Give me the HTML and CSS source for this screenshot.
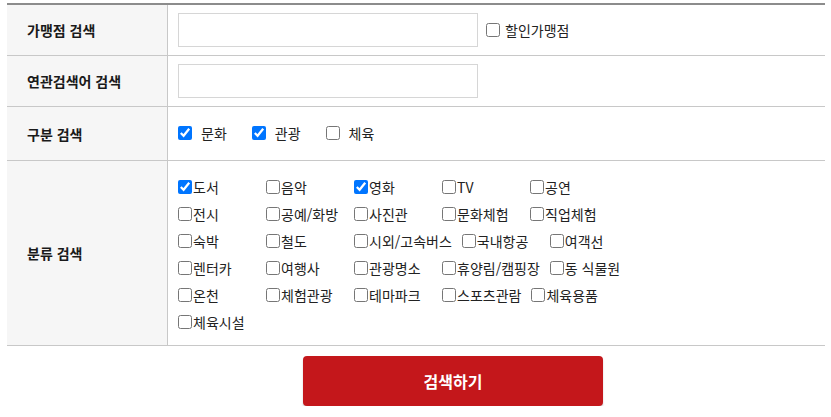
FILE: index.html
```html
<!DOCTYPE html>
<html lang="ko">
<head>
<meta charset="utf-8">
<title>가맹점 검색</title>
<link rel="stylesheet" href="styles.css">
</head>
<body>
<div class="search">
  <div class="table">
    <div class="row r1">
      <div class="th">가맹점 검색</div>
      <div class="td">
        <input type="text" class="txt">
        <label class="chk single"><input type="checkbox"><span>할인가맹점</span></label>
      </div>
    </div>
    <div class="row r2">
      <div class="th">연관검색어 검색</div>
      <div class="td"><input type="text" class="txt"></div>
    </div>
    <div class="row r3">
      <div class="th">구분 검색</div>
      <div class="td gubun">
        <label class="chk big"><input type="checkbox" checked><span>문화</span></label>
        <label class="chk big"><input type="checkbox" checked><span>관광</span></label>
        <label class="chk big"><input type="checkbox"><span>체육</span></label>
      </div>
    </div>
    <div class="row r4">
      <div class="th">분류 검색</div>
      <div class="td">
        <div class="cats">
          <label class="item"><input type="checkbox" checked><span>도서</span></label>
          <label class="item"><input type="checkbox"><span>음악</span></label>
          <label class="item"><input type="checkbox" checked><span>영화</span></label>
          <label class="item"><input type="checkbox"><span>TV</span></label>
          <label class="item"><input type="checkbox"><span>공연</span></label>
          <label class="item"><input type="checkbox"><span>전시</span></label>
          <label class="item"><input type="checkbox"><span>공예/화방</span></label>
          <label class="item"><input type="checkbox"><span>사진관</span></label>
          <label class="item"><input type="checkbox"><span>문화체험</span></label>
          <label class="item"><input type="checkbox"><span>직업체험</span></label>
          <label class="item"><input type="checkbox"><span>숙박</span></label>
          <label class="item"><input type="checkbox"><span>철도</span></label>
          <label class="item"><input type="checkbox"><span>시외/고속버스</span></label>
          <label class="item"><input type="checkbox"><span>국내항공</span></label>
          <label class="item"><input type="checkbox"><span>여객선</span></label>
          <label class="item"><input type="checkbox"><span>렌터카</span></label>
          <label class="item"><input type="checkbox"><span>여행사</span></label>
          <label class="item"><input type="checkbox"><span>관광명소</span></label>
          <label class="item"><input type="checkbox"><span>휴양림/캠핑장</span></label>
          <label class="item"><input type="checkbox"><span>동 식물원</span></label>
          <label class="item"><input type="checkbox"><span>온천</span></label>
          <label class="item"><input type="checkbox"><span>체험관광</span></label>
          <label class="item"><input type="checkbox"><span>테마파크</span></label>
          <label class="item"><input type="checkbox"><span>스포츠관람</span></label>
          <label class="item"><input type="checkbox"><span>체육용품</span></label>
          <label class="item"><input type="checkbox"><span>체육시설</span></label>
        </div>
      </div>
    </div>
  </div>
  <div class="actions">
    <button type="button" class="btn">검색하기</button>
  </div>
</div>
</body>
</html>
```
FILE: styles.css
```css
* { box-sizing: border-box; }
html, body { margin: 0; padding: 0; background: #fff; }
body {
  font-family: "Noto Sans CJK KR", "Noto Sans", "Liberation Sans", sans-serif;
  font-size: 14px;
  color: #222;
}
.search {
  padding: 3px 6px 0 7px;
}
.table {
  border-top: 2px solid #8c8c8c;
}
.row {
  display: grid;
  grid-template-columns: 161px 1fr;
  border-bottom: 1px solid #c8c8c8;
}
.r1, .r2 { height: 51px; }
.r3 { height: 54px; }
.r4 { height: 185px; }
.th {
  background: #f6f6f6;
  border-right: 1px solid #c8c8c8;
  display: flex;
  align-items: center;
  padding-left: 20px;
  font-weight: bold;
  color: #1a1a1a;
  line-height: 16px;
}
.td {
  display: flex;
  align-items: center;
  padding-left: 10px;
}
.txt {
  width: 300px;
  height: 34px;
  border: 1px solid #d6d6d6;
  margin: 0;
  padding: 0 8px;
  font: inherit;
  outline: none;
}
input[type="checkbox"] {
  width: 14px;
  height: 14px;
  margin: 0;
  flex: none;
}
.chk {
  display: flex;
  align-items: center;
  line-height: 16px;
}
.single { margin-left: 8px; }
.single span { margin-left: 5px; }
.big span { margin-left: 9px; }
.big { margin-right: 25px; }
.gubun { padding-bottom: 1px; }
.r4 .td {
  align-items: flex-start;
}
.cats {
  display: flex;
  flex-wrap: wrap;
  align-content: flex-start;
  width: 480px;
  padding-top: 12px;
}
.item {
  display: flex;
  align-items: center;
  min-width: 78px;
  margin-right: 10px;
  height: 27px;
  line-height: 16px;
  white-space: nowrap;
}
.item span { margin-left: 1px; }
.actions {
  display: flex;
  padding-top: 10px;
  padding-left: 296px;
}
.btn {
  width: 300px;
  height: 50px;
  background: #c4171b;
  color: #fff;
  border: 0;
  border-radius: 4px;
  box-shadow: 0 2px 2px #d0d0d0;
  font-family: inherit;
  font-size: 16px;
  font-weight: bold;
  cursor: pointer;
}
```
